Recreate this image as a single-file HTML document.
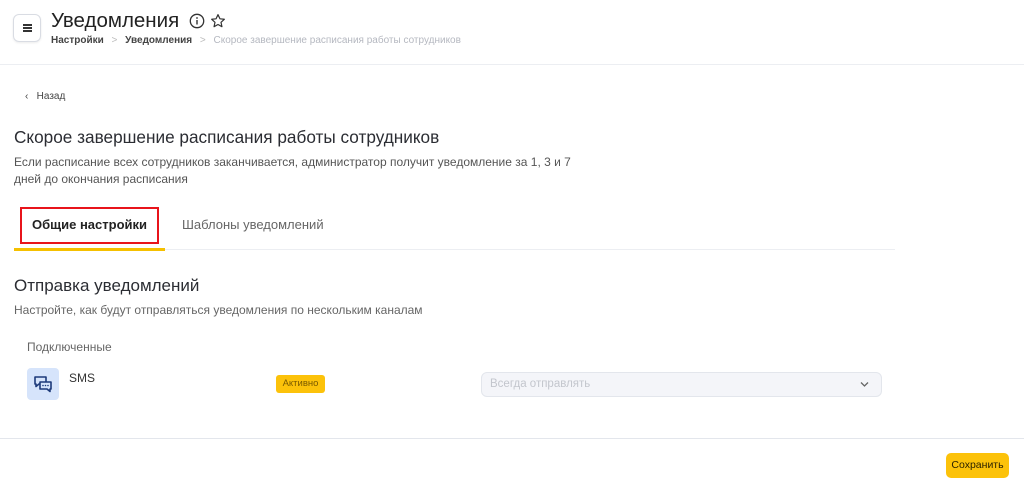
<!DOCTYPE html>
<html><head><meta charset="utf-8"><style>
*{box-sizing:border-box;margin:0;padding:0}
body{width:1024px;height:489px;background:#fff;font-family:"Liberation Sans","Noto Sans CJK SC",sans-serif;color:#2b2d33;position:relative;overflow:hidden}
.abs{position:absolute;white-space:nowrap}
</style></head><body>
<div class="abs" style="left:13px;top:14px;width:28px;height:28px;border:1px solid #d9dce3;border-radius:6px;box-shadow:0 1px 2px rgba(0,0,0,.08)">
 <div style="position:absolute;left:9px;top:9px;width:9px;height:2px;background:#333;box-shadow:0 3px 0 #333,0 6px 0 #333"></div>
</div>
<div class="abs" style="left:51px;top:9px;font-size:20.5px;color:#222">Уведомления</div>
<svg class="abs" style="left:189px;top:13px" width="16" height="16" viewBox="0 0 16 16"><circle cx="8" cy="8" r="6.7" fill="none" stroke="#333" stroke-width="1.3"/><rect x="7.3" y="7" width="1.4" height="4.5" fill="#333"/><circle cx="8" cy="5" r=".9" fill="#333"/></svg>
<svg class="abs" style="left:210px;top:13px" width="16" height="16" viewBox="0 0 24 24"><path d="M12 2.5l2.9 6.2 6.6.7-5 4.5 1.4 6.6L12 17.2l-5.9 3.3 1.4-6.6-5-4.5 6.6-.7z" fill="none" stroke="#333" stroke-width="1.8" stroke-linejoin="round"/></svg>
<div class="abs" style="left:51px;top:35px;font-size:10px;color:#444;font-weight:600">Настройки <span style="color:#bbb;margin:0 5px;font-weight:normal">&gt;</span> Уведомления <span style="color:#bbb;margin:0 5px;font-weight:normal">&gt;</span> <span style="color:#b5b8c0;font-weight:normal">Скорое завершение расписания работы сотрудников</span></div>
<div class="abs" style="left:0;top:64px;width:1024px;height:1px;background:#eceef2"></div>
<div class="abs" style="left:25px;top:91px;font-size:10px;color:#444">‹&nbsp;&nbsp; Назад</div>
<div class="abs" style="left:14px;top:127px;font-size:17.2px;color:#2b2d33">Скорое завершение расписания работы сотрудников</div>
<div class="abs" style="left:14px;top:154px;font-size:12px;color:#555;line-height:17px">Если расписание всех сотрудников заканчивается, администратор получит уведомление за 1, 3 и 7<br>дней до окончания расписания</div>
<div class="abs" style="left:20px;top:207px;width:139px;height:37px;border:2px solid #e8141b"></div>
<div class="abs" style="left:32px;top:217px;font-size:13px;color:#222;font-weight:bold">Общие настройки</div>
<div class="abs" style="left:182px;top:217px;font-size:13px;color:#666">Шаблоны уведомлений</div>
<div class="abs" style="left:14px;top:248px;width:151px;height:3px;background:#f5c000"></div>
<div class="abs" style="left:165px;top:249px;width:730px;height:1px;background:#eceef2"></div>
<div class="abs" style="left:14px;top:276px;font-size:17px;color:#2b2d33">Отправка уведомлений</div>
<div class="abs" style="left:14px;top:303px;font-size:12px;color:#666">Настройте, как будут отправляться уведомления по нескольким каналам</div>
<div class="abs" style="left:27px;top:340px;font-size:12px;color:#666">Подключенные</div>
<div class="abs" style="left:27px;top:368px;width:32px;height:32px;background:#d6e4fb;border-radius:4px">
 <svg style="position:absolute;left:6px;top:6px" width="20" height="20" viewBox="0 0 20 20"><path d="M2 3h11v7H6l-3 2.5V10H2z" fill="none" stroke="#1d3a7a" stroke-width="1.6" stroke-linejoin="round"/><path d="M7 8h11v7h-1v2.5L14 15H7z" fill="#d6e4fb" stroke="#1d3a7a" stroke-width="1.6" stroke-linejoin="round"/><circle cx="10" cy="11.5" r=".8" fill="#1d3a7a"/><circle cx="12.5" cy="11.5" r=".8" fill="#1d3a7a"/><circle cx="15" cy="11.5" r=".8" fill="#1d3a7a"/></svg>
</div>
<div class="abs" style="left:69px;top:371px;font-size:12px;color:#333">SMS</div>
<div class="abs" style="left:276px;top:375px;width:49px;height:18px;background:#fcc20a;border-radius:3px;font-size:9.5px;color:#7a5a00;text-align:center;line-height:18px">Активно</div>
<div class="abs" style="left:481px;top:372px;width:401px;height:25px;background:#f4f5f9;border:1px solid #e3e6ec;border-radius:6px">
 <span style="position:absolute;left:8px;top:5px;font-size:11.5px;color:#c3c6cd">Всегда отправлять</span>
 <svg style="position:absolute;right:12px;top:8px" width="9" height="7" viewBox="0 0 9 7"><path d="M1 1.5l3.5 3.5L8 1.5" fill="none" stroke="#666" stroke-width="1.3"/></svg>
</div>
<div class="abs" style="left:0;top:438px;width:1024px;height:1px;background:#e3e6ec"></div>
<div class="abs" style="left:946px;top:453px;width:63px;height:25px;background:#fcc20a;border-radius:5px;font-size:10.5px;color:#2b2200;text-align:center;line-height:25px">Сохранить</div>
</body></html>
